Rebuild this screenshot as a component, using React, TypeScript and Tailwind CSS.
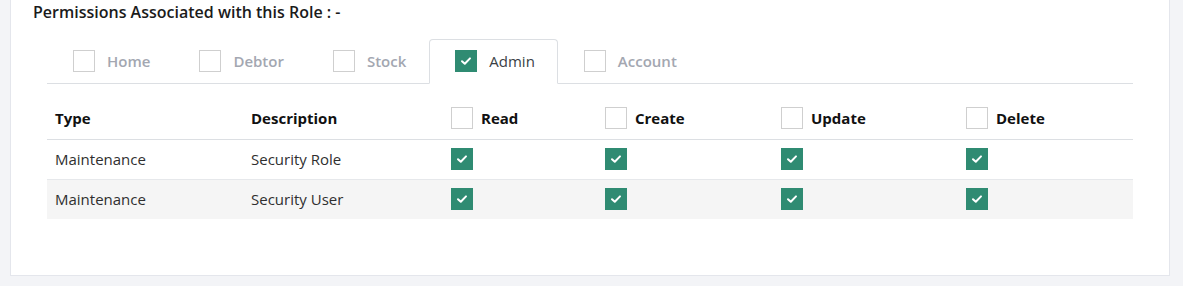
import React from "react";

const Check = ({ checked }: { checked?: boolean }) =>
  checked ? (
    <span className="flex h-[22px] w-[22px] shrink-0 items-center justify-center bg-[#2f8b72]">
      <svg width="12" height="10" viewBox="0 0 12 10" fill="none">
        <path d="M2 5.2 L4.8 7.8 L10 2.4" stroke="white" strokeWidth="2" strokeLinecap="round" strokeLinejoin="round" />
      </svg>
    </span>
  ) : (
    <span className="block h-[22px] w-[22px] shrink-0 border border-[#cfcfcf] bg-white" />
  );

const tabs = [
  { name: "Home", checked: false, active: false },
  { name: "Debtor", checked: false, active: false },
  { name: "Stock", checked: false, active: false },
  { name: "Admin", checked: true, active: true },
  { name: "Account", checked: false, active: false },
];

const rows = [
  { type: "Maintenance", desc: "Security Role" },
  { type: "Maintenance", desc: "Security User" },
];

const cols = ["w-[196px]", "w-[200px]", "w-[154px]", "w-[176px]", "w-[185px]", "flex-1"];

export default function App() {
  return (
    <div className="h-[286px] w-[1183px] bg-[#f3f4f7]" style={{ fontFamily: '"Open Sans", sans-serif' }}>
      <div className="ml-[10px] h-[276px] w-[1160px] border-x border-b border-[#e4e6ec] bg-white pl-[22px] pr-[36px]">
        <div className="text-[16px] font-semibold leading-[22px] text-[#1b1b1b] pt-px">
          Permissions Associated with this Role : -
        </div>
        <div className="ml-[14px] mt-[16px]">
          <div className="flex border-b border-[#dcdfe3]">
            {tabs.map((t) => (
              <div
                key={t.name}
                className={
                  "-mb-px flex h-[45px] items-center gap-[12px] rounded-t-[4px] border pb-px pl-[25px] pr-[22px] " +
                  (t.active ? "border-[#dcdfe3] border-b-white bg-white" : "border-transparent")
                }
              >
                <Check checked={t.checked} />
                <span
                  className={
                    "text-[15px] " +
                    (t.active ? "font-medium text-[#3a3f45]" : "font-semibold text-[#a3a7b1]")
                  }
                >
                  {t.name}
                </span>
              </div>
            ))}
          </div>
          <div className="mt-[12px]">
            <div className="flex h-[44px] items-center border-b border-[#dcdfe3] pt-px text-[15px] font-bold text-[#111]">
              <div className={cols[0] + " px-2"}>Type</div>
              <div className={cols[1] + " px-2"}>Description</div>
              {["Read", "Create", "Update", "Delete"].map((h, i) => (
                <div key={h} className={cols[i + 2] + " flex items-center gap-[8px] px-2"}>
                  <Check />
                  <span>{h}</span>
                </div>
              ))}
            </div>
            {rows.map((r, ri) => (
              <div
                key={ri}
                className={
                  "flex items-center pb-px text-[15px] text-[#2f2f2f] " +
                  (ri === 0 ? "h-[40px] border-b border-[#e6e8eb]" : "h-[39px] bg-[#f5f5f5]")
                }
              >
                <div className={cols[0] + " px-2"}>{r.type}</div>
                <div className={cols[1] + " px-2"}>{r.desc}</div>
                {[0, 1, 2, 3].map((i) => (
                  <div key={i} className={cols[i + 2] + " px-2"}>
                    <Check checked />
                  </div>
                ))}
              </div>
            ))}
          </div>
        </div>
      </div>
    </div>
  );
}
